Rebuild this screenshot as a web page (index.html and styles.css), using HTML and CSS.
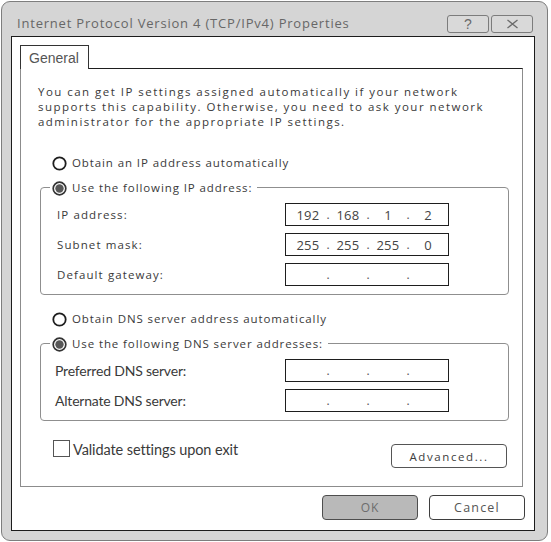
FILE: index.html
```html
<!DOCTYPE html>
<html>
<head>
<meta charset="utf-8">
<link rel="stylesheet" href="styles.css">
</head>
<body>
<div class="window">
  <div class="titlebar">
    <span class="title">Internet Protocol Version 4 (TCP/IPv4) Properties</span>
    <div class="caption-buttons">
      <div class="cap-btn">?</div>
      <div class="cap-btn"><svg width="13" height="10" viewBox="0 0 13 10"><path d="M1.5 1 L11.5 9 M11.5 1 L1.5 9" stroke="#6a6a6a" stroke-width="1.3" fill="none"/></svg></div>
    </div>
  </div>
  <div class="client">
    <div class="tab">General</div>
    <div class="panel">
      <p class="desc">You can get IP settings assigned automatically if your network<br>supports this capability. Otherwise, you need to ask your network<br>administrator for the appropriate IP settings.</p>

      <div class="option first">
        <svg class="radio" width="15" height="15" viewBox="0 0 15 15"><circle cx="7.5" cy="7.5" r="6.2" fill="#fff" stroke="#1e1e1e" stroke-width="1.8"/></svg>
        <span>Obtain an IP address automatically</span>
      </div>
      <fieldset class="group">
        <legend class="option">
          <svg class="radio" width="15" height="15" viewBox="0 0 15 15"><circle cx="7.5" cy="7.5" r="6.3" fill="#fff" stroke="#333" stroke-width="1.7"/><circle cx="7.5" cy="7.5" r="4.2" fill="#575757"/></svg>
          <span>Use the following IP address:</span>
        </legend>
        <div class="field">
          <span class="label spaced">IP address:</span>
          <div class="ip"><span>192</span><i>.</i><span>168</span><i>.</i><span>1</span><i>.</i><span>2</span></div>
        </div>
        <div class="field">
          <span class="label spaced">Subnet mask:</span>
          <div class="ip"><span>255</span><i>.</i><span>255</span><i>.</i><span>255</span><i>.</i><span>0</span></div>
        </div>
        <div class="field">
          <span class="label spaced">Default gateway:</span>
          <div class="ip"><span></span><i>.</i><span></span><i>.</i><span></span><i>.</i><span></span></div>
        </div>
      </fieldset>

      <div class="option dns-auto">
        <svg class="radio" width="15" height="15" viewBox="0 0 15 15"><circle cx="7.5" cy="7.5" r="6.2" fill="#fff" stroke="#1e1e1e" stroke-width="1.8"/></svg>
        <span>Obtain DNS server address automatically</span>
      </div>
      <fieldset class="group">
        <legend class="option">
          <svg class="radio" width="15" height="15" viewBox="0 0 15 15"><circle cx="7.5" cy="7.5" r="6.3" fill="#fff" stroke="#333" stroke-width="1.7"/><circle cx="7.5" cy="7.5" r="4.2" fill="#575757"/></svg>
          <span>Use the following DNS server addresses:</span>
        </legend>
        <div class="field">
          <span class="label plain">Preferred DNS server:</span>
          <div class="ip"><span></span><i>.</i><span></span><i>.</i><span></span><i>.</i><span></span></div>
        </div>
        <div class="field">
          <span class="label plain">Alternate DNS server:</span>
          <div class="ip"><span></span><i>.</i><span></span><i>.</i><span></span><i>.</i><span></span></div>
        </div>
      </fieldset>

      <div class="panel-footer">
        <div class="check-row">
          <span class="checkbox"></span>
          <span class="check-label">Validate settings upon exit</span>
        </div>
        <div class="btn advanced">Advanced...</div>
      </div>
    </div>
    <div class="dialog-buttons">
      <div class="btn ok">OK</div>
      <div class="btn cancel">Cancel</div>
    </div>
  </div>
</div>
</body>
</html>
```

FILE: styles.css
```css
html, body {
  margin: 0;
  padding: 0;
  background: #ffffff;
}

body {
  font-family: "Open Sans", "DejaVu Sans", sans-serif;
  color: #333;
}

.window {
  box-sizing: border-box;
  width: 547px;
  height: 540px;
  margin: 1px 0 0 1px;
  border: 1px solid #7e7e7e;
  border-radius: 9px;
  background: #d5d5d5;
  display: flex;
  flex-direction: column;
}

.titlebar {
  box-sizing: border-box;
  height: 34px;
  padding: 10px 14px 3px 15px;
  display: flex;
  align-items: center;
  justify-content: space-between;
}

.title {
  font-size: 13px;
  letter-spacing: 0.8px;
  color: #676767;
}

.caption-buttons {
  display: flex;
  gap: 2px;
  margin-top: 2px;
}

.cap-btn {
  box-sizing: border-box;
  width: 42px;
  height: 18px;
  border: 1px solid #7c7c7c;
  border-radius: 3px;
  background: #d9d9d9;
  display: flex;
  align-items: center;
  justify-content: center;
  font-family: "Liberation Sans", sans-serif;
  font-size: 14px;
  color: #6a6a6a;
  line-height: 1;
}

.client {
  box-sizing: border-box;
  margin-left: 9px;
  width: 524px;
  height: 495px;
  border: 1px solid #1c1c1c;
  background: #ffffff;
  padding: 8px 10px 0 8px;
}

.tab {
  position: relative;
  z-index: 1;
  box-sizing: border-box;
  width: 69px;
  height: 24px;
  margin-bottom: -1px;
  border: 1px solid #333;
  border-bottom: none;
  background: #fff;
  font-family: "Liberation Sans", Arial, sans-serif;
  font-size: 14px;
  color: #555;
  padding: 4px 0 0 8px;
  line-height: 16px;
}

.panel {
  box-sizing: border-box;
  width: 503px;
  height: 419px;
  border: 1px solid #8c8c8c;
  border-top-color: #1e1e1e;
  padding: 15px 0 0 17px;
}

.desc {
  margin: 0;
  font-size: 11.5px;
  letter-spacing: 1.47px;
  line-height: 15px;
  color: #3a3a3a;
}

.option {
  display: flex;
  align-items: center;
  height: 20px;
  font-size: 11.5px;
  letter-spacing: 0.9px;
  color: #3a3a3a;
}

.option .radio {
  flex: none;
  margin-top: 2px;
  margin-right: 5px;
}

.option.first {
  margin: 23px 0 0 14px;
}

.option.dns-auto {
  margin: 13px 0 0 14px;
}

.group {
  box-sizing: border-box;
  width: 469px;
  margin: 5px 0 0 2px;
  border: 1px solid #8f8f8f;
  border-radius: 4px;
  padding: 6px 0 8px 16px;
  display: flex;
  flex-direction: column;
  gap: 7px;
}

.group legend.option {
  margin-left: -7px;
  padding: 0 5px 0 2px;
}

.field {
  display: flex;
  align-items: center;
  height: 23px;
}

.label {
  width: 228px;
  flex: none;
  color: #3a3a3a;
}

.label.spaced {
  font-size: 11.5px;
  letter-spacing: 1.1px;
}

.label.plain {
  font-family: "Lato", "Open Sans", sans-serif;
  font-size: 14px;
  letter-spacing: -0.2px;
  margin-left: -2px;
  width: 230px;
}

.ip {
  box-sizing: border-box;
  width: 164px;
  height: 23px;
  border: 1px solid #1e1e1e;
  padding-left: 5px;
  display: grid;
  grid-template-columns: 34px 6px 34px 6px 34px 6px 34px;
  align-items: center;
  font-size: 13px;
  color: #444;
}

.ip span {
  text-align: center;
  letter-spacing: 0.3px;
}

.ip i {
  font-style: normal;
  text-align: center;
  font-size: 12px;
  color: #555;
}

.panel-footer {
  display: flex;
  align-items: flex-start;
  justify-content: space-between;
  margin: 19px 15px 0 15px;
}

.check-row {
  display: flex;
  align-items: center;
  height: 17px;
}

.checkbox {
  box-sizing: border-box;
  width: 17px;
  height: 17px;
  border: 1px solid #555;
  background: #fff;
  margin-right: 3px;
}

.check-label {
  font-family: "Lato", "Open Sans", sans-serif;
  font-size: 14.5px;
  letter-spacing: -0.1px;
  color: #3a3a3a;
  margin-top: 2px;
}

.btn {
  box-sizing: border-box;
  display: flex;
  align-items: center;
  justify-content: center;
  border-radius: 4px;
  font-size: 11.5px;
  color: #3d3d3d;
}

.advanced {
  width: 116px;
  height: 24px;
  margin-top: 4px;
  border: 1px solid #555;
  letter-spacing: 1.6px;
  background: #fff;
}

.dialog-buttons {
  display: flex;
  justify-content: flex-end;
  gap: 11px;
  width: 505px;
  margin-top: 8px;
}

.ok {
  width: 96px;
  height: 25px;
  border: 1px solid #4e4e4e;
  background: #b9b9b9;
  color: #6d6d6d;
  font-size: 12px;
  letter-spacing: 0.8px;
}

.cancel {
  width: 96px;
  height: 25px;
  border: 1px solid #3e3e3e;
  background: #fff;
  font-size: 12.5px;
  letter-spacing: 1.2px;
  color: #555;
}
```
